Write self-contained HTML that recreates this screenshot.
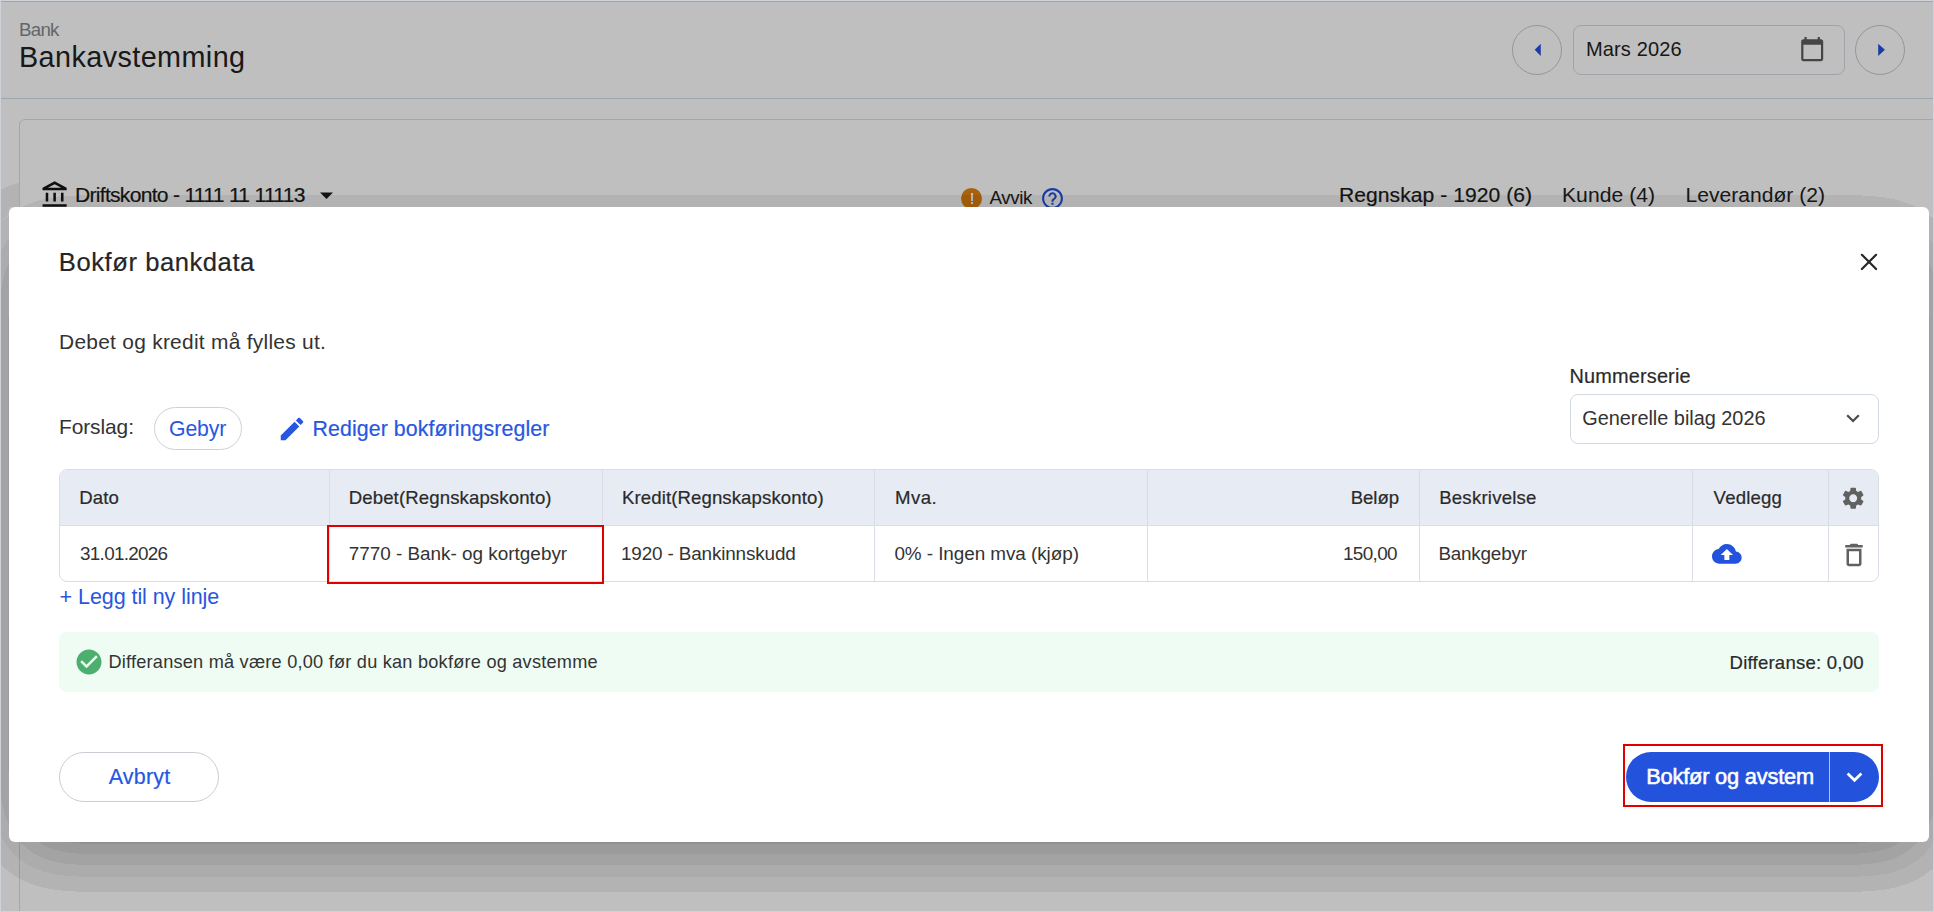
<!DOCTYPE html>
<html><head><meta charset="utf-8">
<style>
*{box-sizing:border-box;margin:0;padding:0}
html,body{width:1934px;height:912px;overflow:hidden;background:#fff}
body{position:relative;font-family:"Liberation Sans",sans-serif;color:#333}
.a{position:absolute}
.t{position:absolute;white-space:nowrap;line-height:1}
.m{-webkit-text-stroke:0.2px currentColor}
svg{position:absolute;display:block}
</style></head><body>

<!-- ===== underlying page ===== -->
<div id="page" class="a" style="left:0;top:0;width:1934px;height:912px;background:#fff">
  <div class="a" style="left:0;top:1px;width:1934px;height:1px;background:#d6dce3"></div>
  <div class="t" style="left:19.00px;top:21.00px;font-size:18.75px;letter-spacing:-0.779px;color:#85898e">Bank</div>
  <div class="t" style="left:19.00px;top:42.70px;font-size:28.78px;letter-spacing:0.420px;color:#222">Bankavstemming</div>

  <div class="a" style="left:1512px;top:25px;width:50px;height:50px;border:1px solid #c9c9c9;border-radius:50%"></div>
  <svg style="left:1530px;top:40px" width="16" height="20" viewBox="1530 40 16 20"><path d="M1534.7 49.85L1540.75 43.8V55.9Z" fill="#2350dc"/></svg>
  <div class="a" style="left:1573px;top:25px;width:272px;height:50px;border:1px solid #d5dbe3;border-radius:8px"></div>
  <div class="t" style="left:1585.90px;top:38.90px;font-size:20.06px;letter-spacing:0.141px;color:#222">Mars 2026</div>
  <svg style="left:1799px;top:35.6px" width="26.4" height="26.4" viewBox="0 0 24 24"><path fill="#5c5c5c" d="M20 3h-1V1h-2v2H7V1H5v2H4c-1.1 0-2 .9-2 2v16c0 1.1.9 2 2 2h16c1.1 0 2-.9 2-2V5c0-1.1-.9-2-2-2zm0 18H4V8h16v13z"/></svg>
  <div class="a" style="left:1855px;top:25px;width:50px;height:50px;border:1px solid #c9c9c9;border-radius:50%"></div>
  <svg style="left:1874px;top:40px" width="16" height="20" viewBox="1874 40 16 20"><path d="M1884.9 49.85L1878.2 43.8V55.9Z" fill="#2350dc"/></svg>

  <div class="a" style="left:0;top:98px;width:1934px;height:1px;background:#d5dce6"></div>
  <div class="a" style="left:19px;top:119px;width:2000px;height:900px;border:1px solid #d8dee8;border-radius:6px"></div>

  <svg style="left:39.8px;top:179.6px" width="30.5" height="30.5" viewBox="0 0 24 24"><path fill="#151515" d="M6.5 10h-2v7h2v-7zm6 0h-2v7h2v-7zm8.5 9H2v2h19v-2zm-2.5-9h-2v7h2v-7zm-7-6.74L16.71 6H6.29l5.21-2.74m0-2.26L2 6v2h19V6l-9.5-5z"/></svg>
  <div class="t m" style="left:75.00px;top:183.81px;font-size:21.08px;letter-spacing:-0.718px;color:#1a1a1a">Driftskonto - 1111 11 11113</div>
  <svg style="left:319px;top:191px" width="15" height="9" viewBox="0 0 15 9"><path d="M1 1.5h13L7.5 8z" fill="#1a1a1a"/></svg>

  <div class="a" style="left:961px;top:188px;width:21px;height:21px;border-radius:50%;background:#e5820f"></div>
  <div class="a" style="left:970.7px;top:193.3px;width:2.2px;height:7.5px;background:#fff"></div>
  <div class="a" style="left:970.7px;top:202px;width:2.2px;height:2.2px;background:#fff"></div>
  <div class="t" style="left:989.50px;top:189.00px;font-size:18.75px;letter-spacing:-0.415px;color:#222">Avvik</div>
  <svg style="left:1039.8px;top:185.8px" width="25" height="25" viewBox="0 0 24 24"><path fill="#2350dc" d="M11 18h2v-2h-2v2zm1-16C6.48 2 2 6.48 2 12s4.48 10 10 10 10-4.48 10-10S17.52 2 12 2zm0 18c-4.41 0-8-3.59-8-8s3.59-8 8-8 8 3.59 8 8-3.59 8-8 8zm0-14c-2.21 0-4 1.79-4 4h2c0-1.1.9-2 2-2s2 .9 2 2c0 2-3 1.75-3 5h2c0-2.25 3-2.5 3-5 0-2.21-1.79-4-4-4z"/></svg>

  <div class="t m" style="left:1339.00px;top:184.00px;font-size:21.08px;letter-spacing:0.048px;color:#1a1a1a">Regnskap - 1920 (6)</div>
  <div class="t" style="left:1562.00px;top:184.00px;font-size:21.08px;letter-spacing:0.055px;color:#222">Kunde (4)</div>
  <div class="t" style="left:1685.50px;top:184.00px;font-size:21.08px;letter-spacing:0.008px;color:#222">Leverandør (2)</div>
</div>

<!-- overlay -->
<div class="a" style="left:0;top:0;width:1934px;height:912px;background:rgba(0,0,0,0.25)"></div>

<!-- ===== modal ===== -->
<svg width="0" height="0" style="position:absolute"><filter id="sh" x="-0.2" y="-0.4" width="1.4" height="1.8" color-interpolation-filters="sRGB"><feGaussianBlur in="SourceAlpha" stdDeviation="32 37"/><feComponentTransfer><feFuncA type="linear" slope="1.03" intercept="0"/></feComponentTransfer><feComponentTransfer><feFuncA type="discrete" tableValues="0 0 0 0 0 0 0 0 0 0 0 0 0 0 0 0 0 0 0 0.063 0.063 0.063 0.063 0.063 0.063 0.063 0.063 0.063 0.063 0.063 0.063 0.063 0.063 0.063 0.063 0.063 0.063 0.063 0.063 0.105 0.105 0.105 0.105 0.105 0.105 0.105 0.105 0.105 0.105 0.105 0.105 0.105 0.105 0.105 0.105 0.105 0.105 0.105 0.105 0.105 0.147 0.147 0.147 0.147 0.147 0.147 0.147 0.147 0.147 0.147 0.147 0.147 0.147 0.147 0.147 0.147 0.147 0.147 0.147 0.147 0.147 0.147 0.147 0.19 0.19 0.19 0.19 0.19 0.19 0.19 0.19 0.19 0.19 0.19 0.19 0.19 0.19 0.19 0.19 0.19 0.19 0.19 0.19 0.19 0.245 0.245 0.245 0.245 0.245 0.245 0.245 0.245 0.245 0.245 0.245 0.245 0.245 0.245 0.245 0.245 0.245 0.245 0.245 0.245 0.245 0.245 0.245 0.245 0.245 0.245 0.245 0.245 0.245 0.245 0.245 0.245 0.245 0.245 0.245 0.245 0.245 0.245 0.245 0.245 0.245 0.245 0.245 0.245 0.245 0.245 0.245 0.245 0.245 0.245 0.245 0.245 0.245 0.245 0.245 0.245 0.245 0.245 0.245 0.245 0.245 0.245 0.245 0.245 0.245 0.245 0.245 0.245 0.245 0.245 0.245 0.245 0.245 0.245 0.245 0.245 0.245 0.245 0.245 0.245 0.245 0.245 0.245 0.245 0.245 0.245 0.245 0.245 0.245 0.245 0.245 0.245 0.245 0.245 0.245 0.245"/></feComponentTransfer></filter></svg>
<div class="a" style="left:16.1px;top:242.4px;width:1905.8px;height:602.2px;background:#000;border-radius:6px;filter:url(#sh)"></div>
<svg style="left:0;top:170px" width="30" height="60" viewBox="0 170 30 60"><path d="M1 189.7L10 185.6L19 182.8V207H9V213.5L1 222Z" fill="rgba(0,0,0,0.063)"/></svg>
<div id="modal" class="a" style="left:9px;top:207px;width:1920px;height:635px;background:#fff;border-radius:6px"></div>

<div class="t m" style="left:58.80px;top:250.21px;font-size:25.58px;letter-spacing:0.557px;color:#262626">Bokfør bankdata</div>
<svg style="left:1850px;top:244px" width="40" height="36" viewBox="0 0 40 36"><path d="M11.9 10.8L26.1 25M26.1 10.8L11.9 25" stroke="#262626" stroke-width="2.2" stroke-linecap="round" fill="none"/></svg>

<div class="t" style="left:59.00px;top:331.81px;font-size:20.93px;letter-spacing:0.270px;color:#333">Debet og kredit må fylles ut.</div>

<div class="t" style="left:59.00px;top:416.81px;font-size:20.93px;letter-spacing:-0.087px;color:#333">Forslag:</div>
<div class="a" style="left:154px;top:407px;width:88px;height:43px;border:1px solid #cdd0d8;border-radius:22px"></div>
<div class="t" style="left:169.00px;top:417.81px;font-size:21.22px;letter-spacing:-0.097px;color:#2757e0">Gebyr</div>
<svg style="left:276.6px;top:414.2px" width="30" height="30" viewBox="0 0 24 24"><path fill="#2757e0" d="M3 17.25V21h3.75L17.81 9.94l-3.75-3.75L3 17.25zM20.71 7.04c.39-.39.39-1.02 0-1.41l-2.34-2.34c-.39-.39-1.02-.39-1.41 0l-1.83 1.83 3.75 3.75 1.83-1.83z"/></svg>
<div class="t m" style="left:312.50px;top:418.81px;font-size:21.37px;letter-spacing:0.076px;color:#2757e0">Rediger bokføringsregler</div>

<div class="t m" style="left:1569.50px;top:367.11px;font-size:19.91px;letter-spacing:0.160px;color:#2a2a2a">Nummerserie</div>
<div class="a" style="left:1570px;top:394px;width:309px;height:50px;border:1px solid #d3d9e2;border-radius:8px"></div>
<div class="t" style="left:1582.20px;top:409.31px;font-size:19.91px;letter-spacing:-0.020px;color:#333">Generelle bilag 2026</div>
<svg style="left:1840px;top:405px" width="26" height="24" viewBox="0 0 26 24"><polyline points="7.2,10.2 13,16 18.8,10.2" fill="none" stroke="#4a4a4a" stroke-width="2.2"/></svg>

<!-- table -->
<div id="tbl" class="a" style="left:59px;top:469px;width:1820px;height:113px;border:1px solid #d9dee6;border-radius:8px;overflow:hidden">
  <div class="a" style="left:0;top:0;width:1820px;height:56px;background:#e7ebf3;border-bottom:1px solid #d9dee6"></div>
</div>
<div class="a" style="left:329px;top:470px;width:1px;height:111px;background:#d9dee6"></div>
<div class="a" style="left:602px;top:470px;width:1px;height:111px;background:#d9dee6"></div>
<div class="a" style="left:874px;top:470px;width:1px;height:111px;background:#d9dee6"></div>
<div class="a" style="left:1147px;top:470px;width:1px;height:111px;background:#d9dee6"></div>
<div class="a" style="left:1419px;top:470px;width:1px;height:111px;background:#d9dee6"></div>
<div class="a" style="left:1692px;top:470px;width:1px;height:111px;background:#d9dee6"></div>
<div class="a" style="left:1828px;top:470px;width:1px;height:111px;background:#d9dee6"></div>

<div class="t m" style="left:79.30px;top:488.91px;font-size:18.60px;letter-spacing:0.067px;color:#2a2a2a">Dato</div>
<div class="t m" style="left:348.70px;top:488.91px;font-size:18.60px;letter-spacing:0.118px;color:#2a2a2a">Debet(Regnskapskonto)</div>
<div class="t m" style="left:622.00px;top:488.91px;font-size:18.60px;letter-spacing:0.101px;color:#2a2a2a">Kredit(Regnskapskonto)</div>
<div class="t m" style="left:895.00px;top:488.91px;font-size:18.60px;letter-spacing:0.428px;color:#2a2a2a">Mva.</div>
<div class="t m" style="left:1350.70px;top:488.91px;font-size:18.60px;letter-spacing:-0.051px;color:#2a2a2a">Beløp</div>
<div class="t m" style="left:1439.20px;top:488.91px;font-size:18.60px;letter-spacing:0.218px;color:#2a2a2a">Beskrivelse</div>
<div class="t m" style="left:1713.60px;top:488.91px;font-size:18.60px;letter-spacing:0.158px;color:#2a2a2a">Vedlegg</div>
<svg style="left:1840px;top:484.6px" width="26.4" height="26.4" viewBox="0 0 24 24"><path fill="#616161" d="M19.14 12.94c.04-.3.06-.61.06-.94 0-.32-.02-.64-.07-.94l2.03-1.58c.18-.14.23-.41.12-.61l-1.92-3.32c-.12-.22-.37-.29-.59-.22l-2.39.96c-.5-.38-1.030-.7-1.62-.94l-.36-2.54c-.04-.24-.24-.41-.48-.41h-3.84c-.24 0-.43.17-.47.41l-.36 2.54c-.59.24-1.13.57-1.62.94l-2.39-.96c-.22-.08-.47 0-.59.22L2.74 8.87c-.12.21-.08.47.12.61l2.030 1.58c-.05.3-.09.63-.09.94s.02.64.07.94l-2.03 1.58c-.18.14-.23.41-.12.61l1.92 3.32c.12.22.37.29.59.22l2.39-.96c.5.38 1.03.7 1.62.94l.36 2.54c.05.24.24.41.48.41h3.84c.24 0 .44-.17.47-.41l.36-2.54c.59-.24 1.13-.56 1.62-.94l2.39.96c.22.08.47 0 .59-.22l1.92-3.32c.12-.22.07-.47-.12-.61l-2.01-1.58zM12 15.6c-1.98 0-3.6-1.62-3.6-3.6s1.62-3.6 3.6-3.6 3.6 1.62 3.6 3.6-1.62 3.6-3.6 3.6z"/></svg>

<div class="t" style="left:80.10px;top:545.11px;font-size:18.90px;letter-spacing:-0.741px;color:#333">31.01.2026</div>
<div class="t" style="left:348.70px;top:545.11px;font-size:18.90px;letter-spacing:0.001px;color:#333">7770 - Bank- og kortgebyr</div>
<div class="t" style="left:621.00px;top:545.11px;font-size:18.90px;letter-spacing:-0.152px;color:#333">1920 - Bankinnskudd</div>
<div class="t" style="left:894.40px;top:545.11px;font-size:18.90px;letter-spacing:-0.063px;color:#333">0% - Ingen mva (kjøp)</div>
<div class="t" style="left:1343.00px;top:545.11px;font-size:18.90px;letter-spacing:-0.639px;color:#333">150,00</div>
<div class="t" style="left:1438.40px;top:545.11px;font-size:18.90px;letter-spacing:-0.217px;color:#333">Bankgebyr</div>
<svg style="left:1712px;top:538.8px" width="29.7" height="29.7" viewBox="0 0 24 24"><path fill="#2352dc" d="M19.35 10.04C18.67 6.59 15.64 4 12 4 9.11 4 6.6 5.64 5.35 8.04 2.34 8.36 0 10.91 0 14c0 3.31 2.69 6 6 6h13c2.76 0 5-2.240 5-5 0-2.64-2.05-4.78-4.65-4.96zM14 13v4h-4v-4H7l5-5 5 5h-3z"/></svg>
<svg style="left:1838.5px;top:540px" width="30" height="30" viewBox="0 0 24 24"><path fill="#616161" d="M6 19c0 1.1.9 2 2 2h8c1.1 0 2-.9 2-2V7H6v12zM8 9h8v10H8V9zm7.5-5l-1-1h-5l-1 1H5v2h14V4z"/></svg>

<!-- red highlight -->
<div class="a" style="left:327px;top:525px;width:277px;height:59px;border:2px solid #e00000"></div>

<div class="t" style="left:59.60px;top:586.90px;font-size:21.51px;letter-spacing:-0.064px;color:#2757e0">+ Legg til ny linje</div>

<!-- green banner -->
<div class="a" style="left:59px;top:632px;width:1820px;height:60px;background:#effcf3;border-radius:8px"></div>
<svg style="left:74px;top:647px" width="30" height="30" viewBox="0 0 24 24"><path fill="#4caf6e" d="M12 2C6.48 2 2 6.48 2 12s4.48 10 10 10 10-4.48 10-10S17.52 2 12 2zm-2 15l-5-5 1.41-1.41L10 14.17l7.59-7.59L19 8l-9 9z"/></svg>
<div class="t" style="left:108.40px;top:652.60px;font-size:18.17px;letter-spacing:0.227px;color:#333">Differansen må være 0,00 før du kan bokføre og avstemme</div>
<div class="t m" style="left:1729.50px;top:653.71px;font-size:18.60px;letter-spacing:0.213px;color:#2a2a2a">Differanse: 0,00</div>

<!-- buttons -->
<div class="a" style="left:59px;top:752px;width:160px;height:50px;border:1px solid #cbcdd5;border-radius:25px"></div>
<div class="t m" style="left:108.70px;top:766.81px;font-size:21.51px;letter-spacing:0.205px;color:#2757e0">Avbryt</div>

<div class="a" style="left:1623px;top:744px;width:260px;height:63px;border:2px solid #e00000"></div>
<div class="a" style="left:1626px;top:752px;width:253px;height:50px;background:#2352dc;border-radius:25px"></div>
<div class="a" style="left:1829px;top:752px;width:1px;height:50px;background:#b7c4f2"></div>
<div class="t m" style="left:1646.20px;top:765.91px;font-size:21.80px;letter-spacing:-0.190px;color:#fff;-webkit-text-stroke:0.55px currentColor">Bokfør og avstem</div>
<svg style="left:1840px;top:762px" width="30" height="30" viewBox="0 0 30 30"><polyline points="7.6,11.6 14.5,18.3 21.4,11.6" fill="none" stroke="#fff" stroke-width="2.8"/></svg>

<!-- frame -->
<div class="a" style="left:0;top:0;width:1934px;height:912px;border:1px solid #ced3da"></div>
</body></html>
